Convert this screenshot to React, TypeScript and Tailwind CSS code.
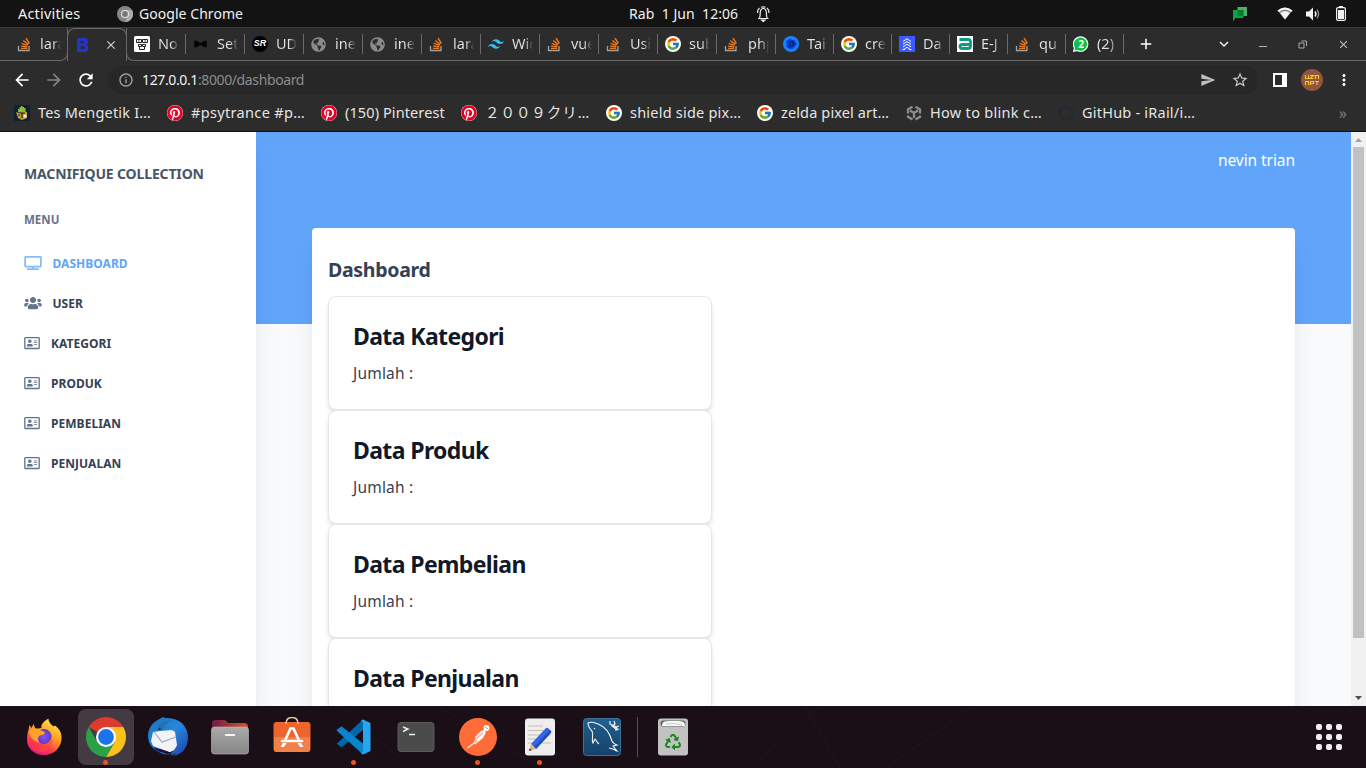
import React from 'react';
import { FaTv, FaUsers, FaRegAddressCard, FaPinterest, FaGithub, FaGlobeAmericas, FaRecycle } from 'react-icons/fa';
import { FcGoogle } from 'react-icons/fc';
import { SiTailwindcss } from 'react-icons/si';
import { MdArrowBack, MdArrowForward, MdRefresh, MdInfoOutline, MdSend, MdStarBorder, MdMoreVert, MdAdd, MdClose, MdExpandMore } from 'react-icons/md';

const Stack = () => (
  <svg viewBox="0 0 16 16" className="h-4 w-4" fill="none">
    <path d="M1.500 10v4.500h10.500V10" stroke="#a0a4a8" strokeWidth="1.300" />
    <g stroke="#f07818" strokeWidth="1.400">
      <path d="M4 12.400h6.200M4.100 10.100l6.100.7M4.700 7.400l5.900 1.900M6.300 4.500l5 3.900M9 2.200l3.400 5.300" />
    </g>
  </svg>
);
const Google = () => (
  <span className="flex h-4 w-4 items-center justify-center rounded-full bg-white"><FcGoogle size={14} /></span>
);
const Pin = () => (
  <span className="flex h-4 w-4 items-center justify-center rounded-full bg-white"><FaPinterest size={16} color="#e60023" /></span>
);
const Globe = () => <FaGlobeAmericas size={15} color="#8b8b8b" />;
const Robot = () => (
  <svg viewBox="0 0 16 16" className="h-4 w-4">
    <rect width="16" height="16" rx="1.500" fill="#fff" />
    <g fill="none" stroke="#222">
      <path d="M2.500 3.500h5v3h-5zM8.500 3.500h5v3h-5zM4.500 8.500h3v2h-3zM8.500 8.500h3v2h-3zM5.500 10.500v3h5v-3M4 5h1.500M10.500 5H12" />
    </g>
  </svg>
);
const Bow = () => (
  <svg viewBox="0 0 16 16" className="h-4 w-4"><path d="M1.500 4.500q3 0 5 2.200h2q2-2.200 5-2.200.8 3.500 0 7-3 0-5-2.200h-2q-2 2.200-5 2.200-.8-3.500 0-7z" fill="#050505" /></svg>
);
const SR = () => (
  <span className="flex h-4 w-4 items-center justify-center rounded-full bg-black font-['Liberation_Sans'] text-[9px] font-bold italic text-white">SR</span>
);
const Tail = () => <SiTailwindcss size={16} color="#38bdf8" />;
const Blob = () => (
  <svg viewBox="0 0 16 16" className="h-4 w-4">
    <circle cx="8" cy="8" r="8" fill="#1583ff" />
    <path d="M3.500 4.500 5.500 4l1.500-1.500 2 1.500 2.500 0 1 2 1.500 2-2 2.500-1.500 2-2.500.5-2-.5-2.500-1.500z" fill="#0a3ccf" />
    <path d="M6.500 5q4-1 5 2-.5 3-3.500 3l-1.500 2.500z" fill="#0b2371" />
    <path d="M8 6.500l2 1.200L8 9z" fill="#1565e8" />
  </svg>
);
const Da = () => (
  <svg viewBox="0 0 16 16" className="h-4 w-4">
    <rect width="16" height="16" fill="#3d5afe" />
    <path d="M4 5.500 8 2.700l4 2.800M4 8.200l4-2.700 4 2.700M4 10.900l4-2.700 4 2.700M5 13.500l3-2.300 3 2.300M3.500 13.500h2.500M10 13.500h2.500" fill="none" stroke="#fff" strokeWidth="1" />
  </svg>
);
const EJ = () => (
  <svg viewBox="0 0 16 16" className="h-4 w-4">
    <rect width="16" height="16" fill="#fff" />
    <path d="M2.500 3.500h8.500q2.500 0 2.500 2.500v4q0 2.500-2.500 2.500H5q-2 0-2-2t2-2h8" fill="none" stroke="#0d9b84" strokeWidth="2.800" />
  </svg>
);
const WA = () => (
  <span className="relative flex h-4 w-4 items-center justify-center">
    <svg viewBox="0 0 16 16" className="absolute h-4 w-4">
      <path d="M.7 15.300 1.500 12A7.200 7.200 0 1 1 4.300 14.500z" fill="#0cc143" stroke="#fff" strokeWidth="1.200" />
    </svg>
    <span className="relative text-[10px] font-bold leading-none text-white">2</span>
  </span>
);
const Unity = () => (
  <svg viewBox="0 0 16 16" className="h-4 w-4" fill="none" stroke="#8d8d8d" strokeWidth="2.300">
    <path d="M6.500 1.800 2 4.400v4M9.500 1.800 14 4.400v4M2 10.500v1.300l4.500 2.600M14 10.500v1.300l-4.500 2.600M4 5.500l4 2.400 4-2.400M8 7.900v5" />
  </svg>
);

const tabs: { icon: () => React.ReactElement; t: string; narrow?: boolean }[] = [
  { icon: Robot, t: 'No' }, { icon: Bow, t: 'Set' }, { icon: SR, t: 'UD' }, { icon: Globe, t: 'ine' },
  { icon: Globe, t: 'ine' }, { icon: Stack, t: 'lara' }, { icon: Tail, t: 'Wid' }, { icon: Stack, t: 'vue' },
  { icon: Stack, t: 'Usi' }, { icon: Google, t: 'sub' }, { icon: Stack, t: 'php' }, { icon: Blob, t: 'Tai', narrow: true },
  { icon: Google, t: 'cre', narrow: true }, { icon: Da, t: 'Da', narrow: true }, { icon: EJ, t: 'E-J', narrow: true },
  { icon: Stack, t: 'qu', narrow: true }, { icon: WA, t: '(2)', narrow: true },
];

function TabText({ children }: { children: string }) {
  return (
    <span className="w-[21px] overflow-hidden whitespace-nowrap bg-linear-to-r from-[#e4e4e4] from-60% to-transparent bg-clip-text text-transparent">{children}</span>
  );
}

function TopBar() {
  return (
    <header className="flex h-[27px] shrink-0 items-center bg-[#131313] text-[14px] text-[#f0f0f0]">
      <span className="ml-[18px] w-[99px] text-[14.500px] tracking-[0.190px]">Activities</span>
      <svg viewBox="0 0 16 16" className="mr-[6px] h-4 w-4">
        <circle cx="8" cy="8" r="8" fill="#858585" />
        <path d="M8 4h7A8 8 0 0 1 8 16l3-6z" fill="#aaa" />
        <circle cx="8" cy="8" r="4" fill="#e4e4e4" />
        <circle cx="8" cy="8" r="2.900" fill="#777" />
      </svg>
      <span className="w-[490px] tracking-[0.050px]">Google Chrome</span>
      <span className="w-[127px] whitespace-pre tracking-[0.050px]">Rab  1 Jun  12:06</span>
      <svg viewBox="0 0 16 18" className="h-[18px] w-4" fill="none" stroke="#eee" strokeWidth="1.200">
        <path d="M2 13.500h10.500M3.500 13c1-2 .5-4 .8-6 .3-2.300 1.300-3.500 3-3.500s2.700 1.200 3 3.500c.3 2-.2 4 .8 6M3.500 3C2 4.200 1.500 6 1.500 8M11 3c1.500 1.200 2 3 2 5M5 2.300q2.300-1 4.500 0" />
        <path d="M5.600 15h3.400l-1.700 1.500z" fill="#eee" />
      </svg>
      <svg viewBox="0 0 15 16" className="ml-[461px] h-4 w-[15px]">
        <path d="M4.500 1H14v9H4.500z" fill="#4fae68" />
        <path d="M0 4h10.500v8H2.500L0 15.500z" fill="#0aa543" />
        <path d="M4.500 4h6v6h-6z" fill="#057c2e" />
      </svg>
      <svg viewBox="0 0 16 13" className="ml-[29px] h-[13px] w-4">
        <path d="M.5 3.600Q8-2.600 15.500 3.600L8 12.500z" fill="#7c7c7c" />
        <path d="M.5 3.600Q8-2.600 15.500 3.600L14 5.200Q8 .3 2 5.200z" fill="#f3f3f3" />
        <path d="M3 6Q8 2 13 6l-5 6.500z" fill="#f3f3f3" />
      </svg>
      <svg viewBox="0 0 16 14" className="ml-[13px] h-[14px] w-4" fill="none">
        <path d="M0 4.500h3L7 .5v13l-4-4H0z" fill="#f3f3f3" />
        <path d="M9 4.500q1.800 2.500 0 5" stroke="#f3f3f3" strokeWidth="1.500" />
        <path d="M11 2.700q3.200 4.300 0 8.600" stroke="#999" strokeWidth="1.200" />
      </svg>
      <svg viewBox="0 0 10 15" className="ml-[14px] h-[15px] w-[10px]">
        <path d="M3 0h4v2H3z" fill="#f3f3f3" />
        <rect x=".6" y="1.600" width="8.800" height="12.800" rx="1.500" fill="none" stroke="#f3f3f3" strokeWidth="1.200" />
        <path d="M2 4h6v9H2z" fill="#f3f3f3" />
      </svg>
    </header>
  );
}

function TabStrip() {
  return (
    <div className="flex h-[34px] shrink-0 border-t border-[#3a3a3a] bg-[#2c2c2c] text-[14.500px]">
      <div className="flex w-[68px] items-center rounded-br-lg border-b border-r border-[#696969] pl-[17px]">
        <Stack />
        <span className="ml-[7px] flex"><TabText>lara</TabText></span>
      </div>
      <div className="-ml-px flex w-[60px] items-center rounded-t-lg border-x border-t border-[#696969] bg-[#2c2c2c] pl-2">
        <svg viewBox="0 0 14 16" className="h-4 w-[14px]">
          <path fillRule="evenodd" d="M1 1h7.500q3.500 0 3.500 3.200 0 2.400-1.600 3.200 2.100.8 2.100 3.600Q12.500 15 8.500 15H1zM4.600 4v2.300h2.500q1.200 0 1.200-1.100T7 4zM4.600 9v3h2.800q1.500 0 1.500-1.500T7.400 9z" fill="#2434c4" />
        </svg>
        <MdClose size={14} color="#d0d0d0" className="ml-[14px]" />
      </div>
      <div className="-ml-px flex grow items-center rounded-bl-lg border-b border-l border-[#696969]">
        {tabs.map(({ icon: Icon, t, narrow }, i) => (
          <div key={i} className={narrow ? 'flex h-5 w-[58px] shrink-0 items-center border-r border-[#6a6a6a] pl-[7px]' : 'flex h-5 w-[59px] shrink-0 items-center border-r border-[#6a6a6a] pl-[7px]'}>
            <span className="mr-2 flex w-4"><Icon /></span>
            <TabText>{t}</TabText>
          </div>
        ))}
        <MdAdd size={18} color="#fff" className="ml-[13px] shrink-0" />
        <MdExpandMore size={18} color="#f0f0f0" className="ml-[60px] shrink-0" />
        <span className="ml-[26px] mt-[5px] h-px w-2 bg-[#b5b5b5]" />
        <svg viewBox="0 0 9 9" className="ml-[31px] h-[9px] w-[9px]" fill="none" stroke="#a8a8a8">
          <path d="M1 3h5v5H1zM3.500 1h5v5" />
        </svg>
        <MdClose size={13} color="#c0c0c0" className="ml-[30px]" />
      </div>
    </div>
  );
}

function Toolbar() {
  return (
    <div className="flex h-[38px] shrink-0 items-center bg-[#2c2c2c]">
      <MdArrowBack size={20} color="#fff" className="ml-3" />
      <MdArrowForward size={20} color="#858585" className="ml-3" />
      <MdRefresh size={20} color="#fff" className="ml-3" />
      <div className="ml-[12px] flex h-[30px] w-[1150px] items-center rounded-full bg-[#272727] pl-[10px]">
        <MdInfoOutline size={16} color="#a0a4a8" />
        <span className="mb-[2px] ml-2 text-[14px] tracking-[-0.380px] text-[#8d8d8d]"><span className="text-[#f2f2f2]">127.0.0.1</span>:8000/dashboard</span>
        <MdSend size={16} color="#bdbdbd" className="ml-auto mr-[15px]" />
        <MdStarBorder size={18} color="#c8c8c8" className="mr-[9px]" />
      </div>
      <svg viewBox="0 0 14 14" className="ml-[15px] h-[14px] w-[14px]"><path fillRule="evenodd" d="M0 0h14v14H0zM2 2v10h7V2z" fill="#fff" /></svg>
      <svg viewBox="0 0 22 22" className="ml-[14px] h-[22px] w-[22px]">
        <circle cx="11" cy="11" r="11" fill="#93553b" />
        <path d="M4.500 6v3.500h3V6M9 6.500h3.500l-3.500 3h3.500M14.500 10V6.500h3V10M4.500 16v-3.500h3V16M9.500 16v-3.500h3v2h-3M14 12.500h4M16 12.500V16" fill="none" stroke="#efc52a" strokeWidth="1.200" />
      </svg>
      <MdMoreVert size={18} color="#fff" className="ml-[12px]" />
    </div>
  );
}

function Bookmark({ className, icon, children }: { className: string; icon: React.ReactNode; children: string }) {
  return (
    <div className={'flex shrink-0 items-center whitespace-nowrap ' + className}>
      <span className="mr-2 flex w-4 shrink-0">{icon}</span>
      <span>{children}</span>
    </div>
  );
}

function Bookmarks() {
  return (
    <div className="flex h-[33px] shrink-0 items-center border-b border-[#120d12] bg-[#2c2c2c] pb-[5px] pl-[14px] text-[14.500px] text-[#e4e4e4]">
      <Bookmark className="w-[153px] tracking-[0.180px]" icon={
        <svg viewBox="0 0 16 16" className="h-4 w-4">
          <rect width="16" height="16" fill="#0c2233" />
          <path d="M4 7V4h1.500v2V2H7v3-4h1.500v4-3H10v3-2h1.500v4z" fill="#8dbb35" />
          <path d="M2 7l3 1 3-2 5 1v6l-5 2-4-2z" fill="#c79a2c" />
          <path d="M6 8h5M8 8v5M4 10h2" stroke="#0c2233" strokeWidth="1.200" />
          <circle cx="11" cy="11" r="1.700" fill="#efe8c8" />
        </svg>
      }>Tes Mengetik I…</Bookmark>
      <Bookmark className="w-[154px] tracking-[0.340px]" icon={<Pin />}>#psytrance #p…</Bookmark>
      <Bookmark className="w-[140px] tracking-[0.100px]" icon={<Pin />}>(150) Pinterest</Bookmark>
      <Bookmark className="w-[145px] tracking-[0.950px]" icon={<Pin />}>２００９クリ…</Bookmark>
      <Bookmark className="w-[151px] tracking-[0.220px]" icon={<Google />}>shield side pix…</Bookmark>
      <Bookmark className="w-[149px] tracking-[0.130px]" icon={<Google />}>zelda pixel art…</Bookmark>
      <Bookmark className="w-[152px] tracking-[0.300px]" icon={<Unity />}>How to blink c…</Bookmark>
      <Bookmark className="tracking-[0.220px]" icon={<FaGithub size={16} color="#24292f" />}>GitHub - iRail/i…</Bookmark>
      <span className="ml-auto mr-[19px] text-[16px] text-[#7d7d7d]">»</span>
    </div>
  );
}

const nav = ['KATEGORI', 'PRODUK', 'PEMBELIAN', 'PENJUALAN'];
const cards = ['Data Kategori', 'Data Produk', 'Data Pembelian', 'Data Penjualan'];

function Page() {
  return (
    <div className="flex h-[574px] shrink-0 overflow-hidden bg-[#f8fafc]">
      <aside className="z-10 w-64 shrink-0 bg-white px-6 pt-8 font-bold shadow-xl">
        <div className="text-[14px] leading-5 tracking-[-0.150px] text-[#475569]">MACNIFIQUE COLLECTION</div>
        <div className="mt-[28px] text-[11.500px] leading-4 text-[#64748b]">MENU</div>
        <nav className="mt-4 text-[12px] tracking-[0.040px] text-[#334155]">
          <div className="flex h-10 items-center text-[#60a5fa]"><FaTv className="mb-[2px] mr-[10.500px] h-[14px] w-[18px] opacity-75" />DASHBOARD</div>
          <div className="flex h-10 items-center"><FaUsers className="mb-[2px] mr-[10.500px] h-[14px] w-[18px] text-[#64748b]" />USER</div>
          {nav.map((n) => (
            <div key={n} className="flex h-10 items-center"><FaRegAddressCard className="mb-[2px] mr-[11px] h-[14px] w-4 text-[#64748b]" />{n}</div>
          ))}
        </nav>
      </aside>
      <main className="w-[1095px] shrink-0">
        <div className="h-48 bg-[#60a5fa] pr-14 pt-4 text-right text-[15.500px] leading-6 tracking-[-0.070px] text-white">nevin trian</div>
        <section className="relative mx-14 -mt-24 h-[700px] rounded bg-white px-4 pt-7 shadow-xl">
          <h1 className="text-[19.500px] font-bold leading-7 tracking-[-0.300px] text-[#334155]">Dashboard</h1>
          <div className="mt-3">
            {cards.map((c) => (
              <article key={c} className="h-[114px] w-96 rounded-lg border border-gray-200 bg-white px-6 pt-[23px] shadow-md">
                <h2 className="text-[23px] font-bold leading-8 tracking-[-0.620px] text-[#111827]">{c}</h2>
                <p className="mt-[9px] text-[15.500px] leading-6 tracking-[0.200px] text-[#374151]">Jumlah :</p>
              </article>
            ))}
          </div>
        </section>
      </main>
      <div className="flex w-[15px] shrink-0 flex-col items-center justify-between bg-[#f1f1f1] py-[6px]">
        <svg viewBox="0 0 7 4" className="h-1 w-[7px]"><path d="M0 4 3.500 0 7 4z" fill="#a3a3a3" /></svg>
        <span className="mb-auto mt-[5px] h-[491px] w-[11px] bg-[#c1c1c1]" />
        <svg viewBox="0 0 7 4" className="h-1 w-[7px]"><path d="M0 0h7L3.500 4z" fill="#505050" /></svg>
      </div>
    </div>
  );
}

const Firefox = () => (
  <svg viewBox="0 0 40 40" className="h-10 w-10">
    <defs>
      <linearGradient id="ff" x1=".8" y1="0" x2=".3" y2="1"><stop stopColor="#fff04a" /><stop offset=".45" stopColor="#ff9a25" /><stop offset=".75" stopColor="#ff3b4b" /><stop offset="1" stopColor="#e31587" /></linearGradient>
      <radialGradient id="fp"><stop stopColor="#8a4ff5" /><stop offset="1" stopColor="#5c3bc4" /></radialGradient>
    </defs>
    <path d="M4.500 13l1-5 2 3 2-4 2 5 6-1c-1-4 3-7 7-9.500 0 4 3 6 5 8l1.500-1c5 4 7 8 6.500 14-1 9-8 15.500-17.500 15.500S3 32 3 22.500c0-4 .5-7 1.500-9.500z" fill="url(#ff)" />
    <circle cx="20" cy="19.500" r="7.500" fill="url(#fp)" />
    <path d="M5 14c4-4 9-3 12-.5l4 1.500-1 2.500-4 1c-3 2-2.500 5 0 7-6-1-10-5-11-11.500z" fill="#ffa229" />
    <path d="M5 25c7 8 20 6 23-4 2 5 0 9-4 12-8 5-16 1-19-8z" fill="#ff473f" opacity=".5" />
  </svg>
);
const Chrome = () => (
  <svg viewBox="0 0 40 40" className="h-10 w-10">
    <path d="M20 20 2.700 10A20 20 0 0 1 37.300 10z" fill="#dc3c2f" />
    <path d="M20 20V10h17.300A20 20 0 0 1 20 40l8.700-15z" fill="#fcc21b" />
    <path d="M20 20l8.700 5L20 40A20 20 0 0 1 2.700 10l8.600 15z" fill="#2aa147" />
    <circle cx="20" cy="20" r="10" fill="#fff" /><circle cx="20" cy="20" r="7.900" fill="#1a73e8" />
  </svg>
);
const Thunderbird = () => (
  <svg viewBox="0 0 40 40" className="h-10 w-10">
    <defs><linearGradient id="tb" x1="0" y1="0" x2="1" y2="1"><stop stopColor="#1673bd" /><stop offset=".5" stopColor="#2787dc" /><stop offset="1" stopColor="#1c3fa8" /></linearGradient></defs>
    <path d="M8 4l5-3 2-1 2 1c14-1 23 8 23 19 0 11-6 17-14 19l2-3-5 3 1-3c-3 2-7 2-11 0C6 33 0 28 0 19 0 13 3 7 8 4z" fill="url(#tb)" />
    <path d="M11 32q10 3 16-2-2 6-7 7-5-.5-9-5z" fill="#1a0f17" />
    <path d="M3 24 5 15l7-1 12-1 3 2 2 13c-2 5-5 7-8 7L5 29z" fill="#f1f3f6" />
    <path d="M6 15l8 10 14-5" fill="none" stroke="#9aa6b8" strokeWidth="1.100" />
    <path d="M3 27l2 3 16 5q-8 2-14-3z" fill="#20113d" />
    <path d="M8 13Q12 3 24 3 17 6 15 13z" fill="#2371b5" />
    <circle cx="11.500" cy="12" r="1.200" fill="#4c2a25" />
  </svg>
);
const Files = () => (
  <svg viewBox="0 0 40 40" className="h-10 w-10">
    <defs><linearGradient id="fb"><stop stopColor="#6e1d47" /><stop offset="1" stopColor="#dd5025" /></linearGradient><linearGradient id="fg" x2="0" y2="1"><stop stopColor="#aaa" /><stop offset="1" stopColor="#858585" /></linearGradient></defs>
    <path d="M2 14V6q0-3 3-3h9q2 0 4 3h16q4 0 4 4v5z" fill="url(#fb)" />
    <rect x="1.500" y="10" width="37" height="27" rx="3" fill="url(#fg)" stroke="#bcbcbc" strokeWidth=".6" />
    <rect x="15" y="17" width="10" height="2" rx=".5" fill="#f5f5f5" />
  </svg>
);
const Store = () => (
  <svg viewBox="0 0 40 40" className="h-10 w-10">
    <rect x="1.500" y="5" width="37" height="30" rx="3" fill="#ed642d" /><path d="M2 20h36v12q0 3-3 3H5q-3 0-3-3z" fill="#f08048" />
    <path d="M14 7q0-6.500 6-6.500T26 7" fill="none" stroke="#eac9a0" strokeWidth="1.500" />
    <path d="m18.500 11.500-5.500 12M21.500 11.500l5.500 12M18.500 11.500h3M10 24h20" fill="none" stroke="#fff" strokeWidth="2.700" strokeLinecap="round" />
    <path d="m11 26-2.500 4h3.500l2.500-4zM25.500 26l2.500 4h3.500L29 26z" fill="#fff" />
  </svg>
);
const Code = () => (
  <svg viewBox="0 0 40 40" className="h-10 w-10">
    <path d="M3 26.500 29 2.500V13L8.500 29.500q-1 .8-2 0L3.200 27q-.5-.3-.2-.5z" fill="#0069aa" />
    <path d="m3 12.500 3.500-2.500q1-.8 2 0L29 26.500v11L3 14q-.7-.8 0-1.500z" fill="#0a84cc" />
    <path d="m29 2.500 7.500 3.500v28L29 37.500l-3-2q3 1 3-2v-27q0-3-3-2z" fill="#25a6ee" />
  </svg>
);
const Terminal = () => (
  <svg viewBox="0 0 40 40" className="h-10 w-10">
    <rect x="2" y="5.500" width="36" height="29" rx="3" fill="#4b4b4b" stroke="#5c5c5c" />
    <path d="m7 10 5 2-5 2.500M13 17.500h6" fill="none" stroke="#eee" strokeWidth="1.400" />
  </svg>
);
const Postman = () => (
  <svg viewBox="0 0 40 40" className="h-10 w-10">
    <circle cx="20" cy="20" r="19" fill="#ff6c37" />
    <circle cx="28.500" cy="11" r="2.900" fill="#fff" /><path d="M26 12.500 19 18l-1 5 2 2 5-4 3-6z" fill="#fff" />
    <path d="m19 20-3 6-6.500 5M20.500 23.500 17 27M24 14l-6 6 1 3" fill="none" stroke="#ffe3d7" strokeWidth="1.500" />
    <path d="m19 21 6-5M27 10l3 2" stroke="#ff6c37" strokeWidth=".8" />
  </svg>
);
const Editor = () => (
  <svg viewBox="0 0 40 40" className="h-10 w-10">
    <rect x="5" y="1.500" width="30" height="37" rx="3" fill="#eee" />
    <path d="M8 9h15M8 13.500h19M8 18h16M8 22h12M8 26h23" stroke="#c5c0b0" strokeWidth="1.200" />
    <path d="m11 27 15-16q1-1 3 1l2 2q1 1-1 3L16 32z" fill="#3466df" /><path d="m14 30 16-17 1 1q1 1-1 3L16 32z" fill="#1f4fc0" />
    <path d="m11 27 5 5-7 2z" fill="#e8b382" /><path d="m9.500 31.500-.5 2.500 3-1z" fill="#333" />
  </svg>
);
const Workbench = () => (
  <svg viewBox="0 0 40 40" className="h-10 w-10">
    <defs><linearGradient id="wb" x2="0" y2="1"><stop stopColor="#20608f" /><stop offset="1" stopColor="#164169" /></linearGradient></defs>
    <rect x="1.500" y="1.500" width="37" height="37" rx="3" fill="url(#wb)" stroke="#3c719a" />
    <path d="M17 27c-3-2-3-5-4-5l-2 4c-2-4 1-8-1-12C7 11 6 8 6 6c3-2 7 0 10 1 8 3 12 10 14 17 1 3 3 3 5 4l-4 1 4 5c-3-1-5-3-8-3" fill="none" stroke="#f1f6fb" strokeWidth="1.100" />
    <path d="m30 8 5 4" stroke="#e8edf2" strokeWidth="2.800" /><path d="M28 4v3l3 2 2-2-1-3M37 9l-3 1v3l3-1" fill="none" stroke="#e8edf2" strokeWidth="1.300" /><circle cx="12.500" cy="11.500" r=".7" fill="#fff" />
  </svg>
);
const Trash = () => (
  <span className="relative flex h-10 w-10 items-center justify-center">
    <svg viewBox="0 0 40 40" className="absolute h-10 w-10">
      <rect x="5" y="1.500" width="30" height="37" rx="3" fill="#c2c2c2" /><rect x="7.500" y="3.500" width="25" height="6" rx="2.500" fill="#686868" />
      <path d="M9 9q0-4 3-4.500l4-.5h9l4 .5q3 .5 3 4.500z" fill="#f8f8f8" /><path d="M13 7q8-1.500 16 1" fill="none" stroke="#aaa" strokeWidth=".6" />
    </svg>
    <FaRecycle size={16} color="#198a20" className="relative mt-[10px]" />
  </span>
);

const dock = [
  { icon: Firefox }, { icon: Chrome, on: true, active: true }, { icon: Thunderbird }, { icon: Files }, { icon: Store },
  { icon: Code, on: true }, { icon: Terminal }, { icon: Postman, on: true }, { icon: Editor, on: true }, { icon: Workbench },
];

function Dock() {
  return (
    <footer className="relative flex h-[62px] shrink-0 items-center bg-[#1a0f17] pl-[13px]">
      <svg viewBox="0 0 1366 62" className="absolute inset-0 h-[62px] w-[1366px]" fill="none" stroke="#231520">
        <path d="m342 0 22 24 50 38M438 0q55 35 97 58M750 62l70-62M840 62l-35-62M975 0q-50 35-90 62" />
      </svg>
      {dock.map(({ icon: Icon, on, active }, i) => (
        <div key={i} className="relative flex h-[62px] w-[62px] items-center justify-center">
          <div className={active ? 'flex h-14 w-14 items-center justify-center rounded-lg bg-[#443a42]' : 'flex h-14 w-14 items-center justify-center'}><Icon /></div>
          {on && <span className="absolute bottom-[3px] left-[28px] h-[5px] w-[5px] rounded-full bg-[#e95420]" />}
        </div>
      ))}
      <span className="relative ml-1 h-10 w-px bg-[#554b52]" />
      <span className="relative ml-[15px]"><Trash /></span>
      <div className="relative ml-auto mr-[24px] grid grid-cols-3 gap-1">
        {Array.from({ length: 9 }, (_, i) => <span key={i} className="h-[6px] w-[6px] rounded-[2px] bg-[#eee]" />)}
      </div>
    </footer>
  );
}

export default function App() {
  return (
    <div className="flex h-[768px] w-[1366px] flex-col overflow-hidden font-['Noto_Sans','Noto_Sans_CJK_JP',sans-serif]">
      <TopBar />
      <TabStrip />
      <Toolbar />
      <Bookmarks />
      <Page />
      <Dock />
    </div>
  );
}
